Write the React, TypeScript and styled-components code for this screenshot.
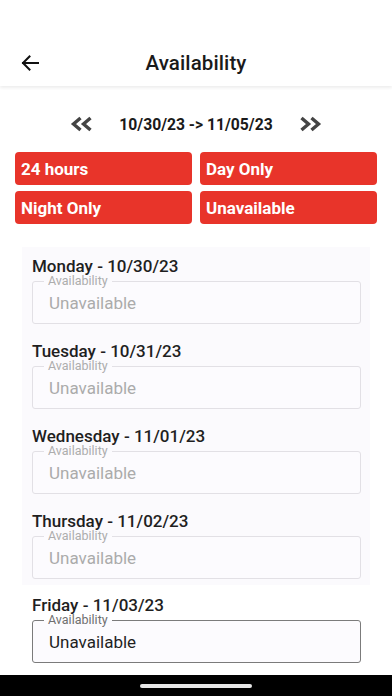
import styled, { createGlobalStyle } from "styled-components";

const GlobalStyle = createGlobalStyle`
  * {
    box-sizing: border-box;
  }
  body {
    margin: 0;
    background: #ffffff;
    font-family: Roboto, "Noto Sans", "Liberation Sans", sans-serif;
  }
`;

type Day = { name: string; date: string; past: boolean };

const days: Day[] = [
  { name: "Monday", date: "10/30/23", past: true },
  { name: "Tuesday", date: "10/31/23", past: true },
  { name: "Wednesday", date: "11/01/23", past: true },
  { name: "Thursday", date: "11/02/23", past: true },
  { name: "Friday", date: "11/03/23", past: false },
];

const presets = ["24 hours", "Day Only", "Night Only", "Unavailable"];

function BackArrow() {
  return (
    <svg width="18" height="16" viewBox="0 0 18 16" fill="none">
      <path d="M17 8H2M8.5 1.5L2 8l6.5 6.5" stroke="#111" strokeWidth="2" strokeLinecap="square" />
    </svg>
  );
}

function DoubleChevron({ dir }: { dir: "left" | "right" }) {
  const d =
    dir === "left"
      ? "M10 2L3 8l7 6M20 2l-7 6 7 6"
      : "M2 2l7 6-7 6M12 2l7 6-7 6";
  return (
    <svg width="23" height="16" viewBox="0 0 22 16" fill="none">
      <path d={d} stroke="#444" strokeWidth="3.4" strokeLinejoin="miter" />
    </svg>
  );
}

function DayField({ day }: { day: Day }) {
  return (
    <DayBlock>
      <DayTitle>
        {day.name} - {day.date}
      </DayTitle>
      <Field $active={!day.past}>
        <Legend $active={!day.past}>Availability</Legend>
        <Value $active={!day.past}>Unavailable</Value>
      </Field>
    </DayBlock>
  );
}

export default function App() {
  const past = days.filter((d) => d.past);
  const upcoming = days.filter((d) => !d.past);

  return (
    <>
      <GlobalStyle />
      <Screen>
        <StatusSpace />
        <Header>
          <BackButton>
            <BackArrow />
          </BackButton>
          <Title>Availability</Title>
        </Header>
        <Scroll>
          <DateNav>
            <NavButton>
              <DoubleChevron dir="left" />
            </NavButton>
            <RangeText>10/30/23 -&gt; 11/05/23</RangeText>
            <NavButton>
              <DoubleChevron dir="right" />
            </NavButton>
          </DateNav>
          <PresetGrid>
            {presets.map((p) => (
              <PresetButton key={p}>{p}</PresetButton>
            ))}
          </PresetGrid>
          <PastCard>
            {past.map((d) => (
              <DayField key={d.date} day={d} />
            ))}
          </PastCard>
          <UpcomingList>
            {upcoming.map((d) => (
              <DayField key={d.date} day={d} />
            ))}
          </UpcomingList>
        </Scroll>
        <NavBar>
          <HomeIndicator />
        </NavBar>
      </Screen>
    </>
  );
}

const Screen = styled.div`
  width: 392px;
  height: 696px;
  display: flex;
  flex-direction: column;
  overflow: hidden;
  background: #ffffff;
`;

const StatusSpace = styled.div`
  height: 40px;
  flex-shrink: 0;
`;

const Header = styled.div`
  height: 46px;
  flex-shrink: 0;
  display: flex;
  align-items: center;
  justify-content: center;
  position: relative;
  z-index: 1;
  background: #ffffff;
  box-shadow: 0 2px 3px rgba(0, 0, 0, 0.07);
`;

const BackButton = styled.div`
  position: absolute;
  left: 21px;
  top: 15px;
  display: flex;
`;

const Title = styled.div`
  font-size: 20.5px;
  font-weight: 500;
  color: #1a1a1a;
  letter-spacing: 0.1px;
`;

const Scroll = styled.div`
  flex: 1;
  overflow: hidden;
  padding: 24px 15px 0;
`;

const DateNav = styled.div`
  height: 28px;
  display: flex;
  align-items: center;
  justify-content: center;
  gap: 26px;
`;

const NavButton = styled.div`
  display: flex;
  align-items: center;
`;

const RangeText = styled.div`
  font-size: 15.7px;
  font-weight: 700;
  color: #1a1a1a;
`;

const PresetGrid = styled.div`
  margin-top: 14px;
  display: grid;
  grid-template-columns: 1fr 1fr;
  column-gap: 8px;
  row-gap: 6px;
`;

const PresetButton = styled.div`
  height: 33px;
  display: flex;
  align-items: center;
  padding-left: 6px;
  background: #e8342a;
  border-radius: 4px;
  color: #ffffff;
  font-size: 17px;
  font-weight: 700;
`;

const PastCard = styled.div`
  margin: 23px 7px 0;
  padding: 11px 9px 6px 10px;
  background: #fbfafd;
  display: flex;
  flex-direction: column;
  gap: 19px;
`;

const UpcomingList = styled.div`
  margin-top: 12px;
  padding: 0 16px 0 17px;
  display: flex;
  flex-direction: column;
  gap: 19px;
`;

const DayBlock = styled.div`
  display: flex;
  flex-direction: column;
`;

const DayTitle = styled.div`
  font-size: 17px;
  font-weight: 500;
  line-height: 16px;
  color: #1f1f1f;
`;

const Field = styled.fieldset<{ $active: boolean }>`
  margin: 0;
  padding: 0 16px 0 11px;
  min-width: 0;
  border: 1px solid ${({ $active }) => ($active ? "#7b7b7b" : "#e2e0e5")};
  border-radius: 3px;
  background: #fcfbfe;
`;

const Legend = styled.legend<{ $active: boolean }>`
  padding: 0 4px;
  font-size: 12.5px;
  line-height: 14px;
  color: ${({ $active }) => ($active ? "#6f6f6f" : "#adadad")};
`;

const Value = styled.div<{ $active: boolean }>`
  padding: 5px 0 10px 5px;
  font-size: 17px;
  line-height: 20px;
  color: ${({ $active }) => ($active ? "#1f1f1f" : "#ababab")};
`;

const NavBar = styled.div`
  height: 21px;
  flex-shrink: 0;
  background: #000000;
  display: flex;
  justify-content: center;
  padding-top: 9px;
`;

const HomeIndicator = styled.div`
  width: 112px;
  height: 4px;
  border-radius: 2px;
  background: #e6e6e6;
`;
